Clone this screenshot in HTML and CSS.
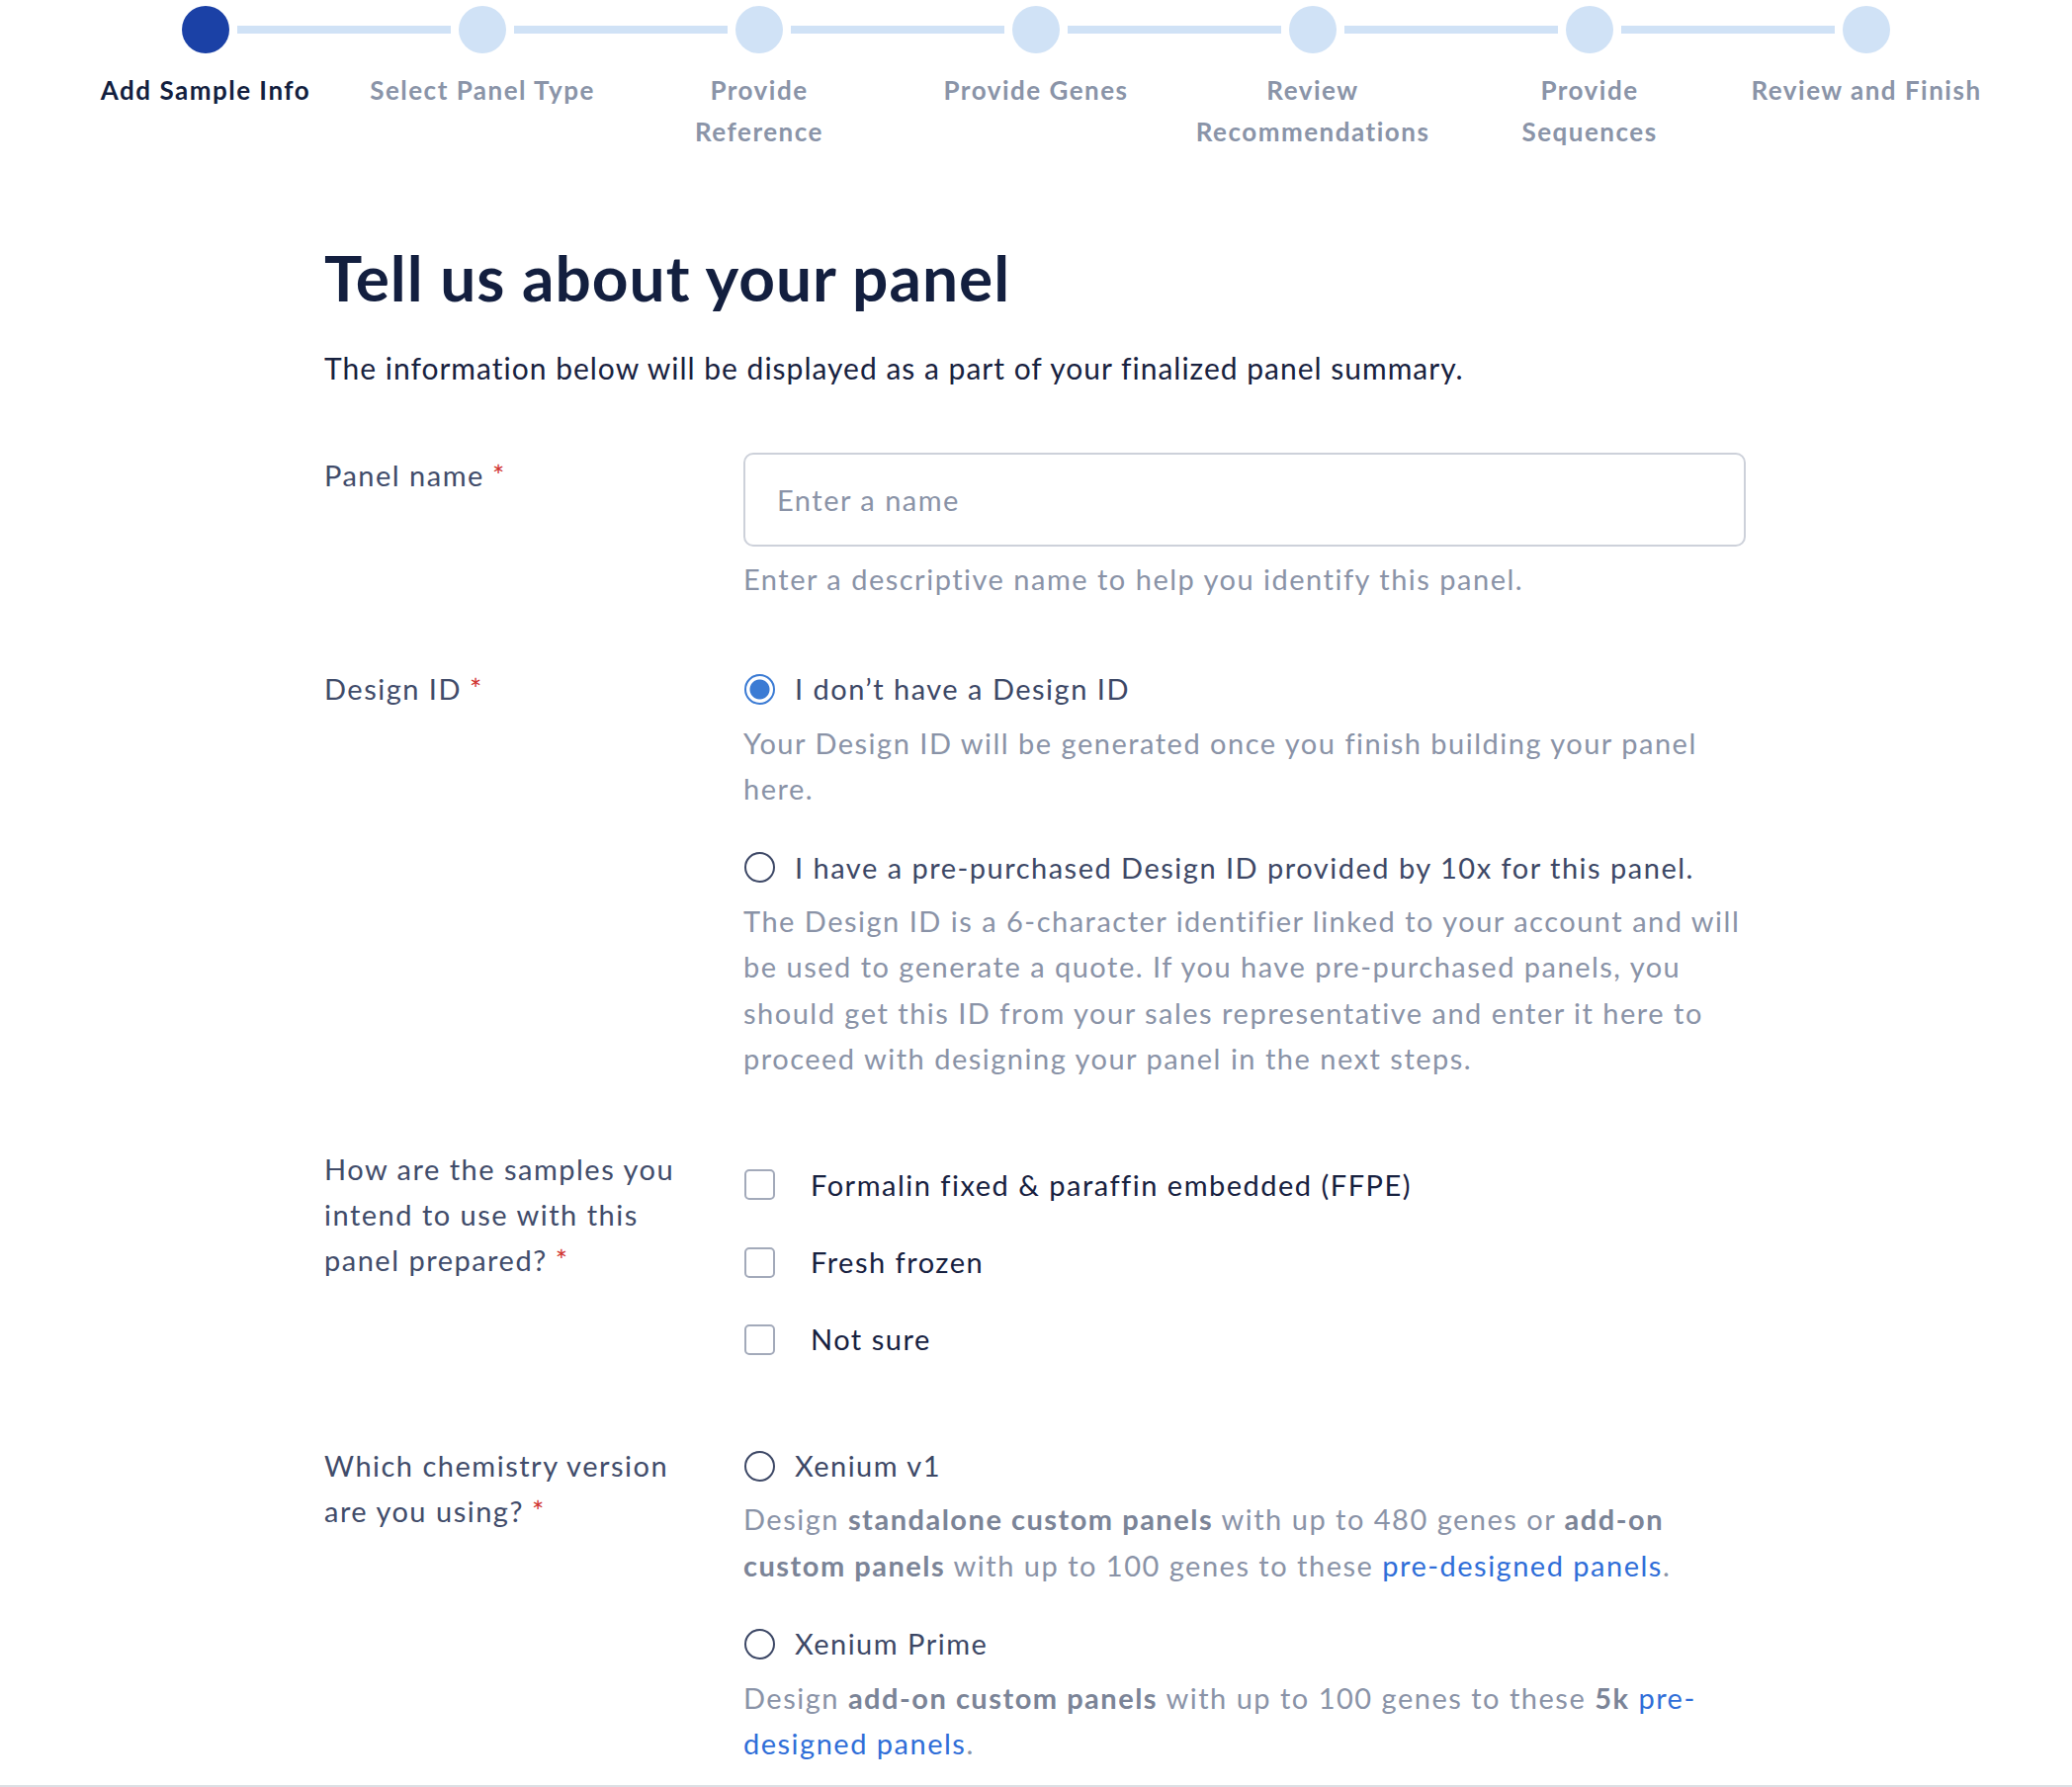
FILE: index.html
```html
<!DOCTYPE html>
<html lang="en">
<head>
<meta charset="utf-8">
<title>Tell us about your panel</title>
<link rel="stylesheet" href="styles.css">
</head>
<body>
<nav class="stepper">
  <div class="track">
    <span class="dot dot-active"></span><span class="bar"></span>
    <span class="dot"></span><span class="bar"></span>
    <span class="dot"></span><span class="bar"></span>
    <span class="dot"></span><span class="bar"></span>
    <span class="dot"></span><span class="bar"></span>
    <span class="dot"></span><span class="bar"></span>
    <span class="dot"></span>
  </div>
  <ol class="step-labels">
    <li class="step-label step-label-active">Add Sample Info</li>
    <li class="step-label">Select Panel Type</li>
    <li class="step-label">Provide<br>Reference</li>
    <li class="step-label">Provide Genes</li>
    <li class="step-label">Review<br>Recommendations</li>
    <li class="step-label">Provide<br>Sequences</li>
    <li class="step-label">Review and Finish</li>
  </ol>
</nav>

<main class="content">
  <h1 class="title">Tell us about your panel</h1>
  <p class="intro">The information below will be displayed as a part of your finalized panel summary.</p>

  <div class="form">
    <div class="row">
      <div class="label">Panel name<span class="req">*</span></div>
      <div class="control">
        <input class="text-input" type="text" placeholder="Enter a name">
        <p class="help help-input">Enter a descriptive name to help you identify this panel.</p>
      </div>
    </div>

    <div class="row">
      <div class="label">Design ID<span class="req">*</span></div>
      <div class="control">
        <div class="option">
          <span class="radio radio-checked"></span>
          <span class="option-text">I don’t have a Design ID</span>
        </div>
        <p class="help help-option">Your Design ID will be generated once you finish building your panel here.</p>
        <div class="option option-next">
          <span class="radio"></span>
          <span class="option-text">I have a pre-purchased Design ID provided by 10x for this panel.</span>
        </div>
        <p class="help help-option">The Design ID is a 6-character identifier linked to your account and will be used to generate a quote. If you have pre-purchased panels, you should get this ID from your sales representative and enter it here to proceed with designing your panel in the next steps.</p>
      </div>
    </div>

    <div class="row">
      <div class="label label-narrow">How are the samples you intend to use with this panel prepared?<span class="req">*</span></div>
      <div class="control">
        <div class="check-item"><span class="checkbox"></span><span class="check-text">Formalin fixed &amp; paraffin embedded (FFPE)</span></div>
        <div class="check-item"><span class="checkbox"></span><span class="check-text">Fresh frozen</span></div>
        <div class="check-item"><span class="checkbox"></span><span class="check-text">Not sure</span></div>
      </div>
    </div>

    <div class="row">
      <div class="label label-narrow">Which chemistry version are you using?<span class="req">*</span></div>
      <div class="control">
        <div class="option">
          <span class="radio"></span>
          <span class="option-text">Xenium v1</span>
        </div>
        <p class="help help-option">Design <b>standalone custom panels</b> with up to 480 genes or <b>add-on custom panels</b> with up to 100 genes to these <a class="link" href="#">pre-designed panels</a>.</p>
        <div class="option option-next">
          <span class="radio"></span>
          <span class="option-text">Xenium Prime</span>
        </div>
        <p class="help help-option">Design <b>add-on custom panels</b> with up to 100 genes to these <b>5k</b> <a class="link" href="#">pre-designed panels</a>.</p>
      </div>
    </div>
  </div>
</main>
<div class="footer-edge"></div>
</body>
</html>
```

FILE: styles.css
```css
* { box-sizing: border-box; }

html, body {
  margin: 0;
  padding: 0;
  background: #ffffff;
}

body {
  font-family: Lato, "Open Sans", "Liberation Sans", sans-serif;
  color: #18223f;
}

/* ---------- stepper ---------- */
.stepper {
  width: 1960px;
  margin: 0 auto;
  padding-top: 6px;
}

.track {
  display: flex;
  align-items: center;
  width: 1728px;
  margin: 0 auto;
}

.dot {
  flex: 0 0 48px;
  width: 48px;
  height: 48px;
  border-radius: 50%;
  background: #d0e2f6;
}

.dot-active {
  background: #1b41a6;
}

.bar {
  flex: 1 1 auto;
  height: 8px;
  margin: 0 8px;
  background: #d0e2f6;
}

.step-labels {
  list-style: none;
  margin: 16px 0 0;
  padding: 0;
  display: grid;
  grid-template-columns: repeat(7, 280px);
}

.step-label {
  justify-self: center;
  text-align: center;
  white-space: nowrap;
  font-size: 26px;
  line-height: 42px;
  font-weight: 700;
  letter-spacing: 1.5px;
  color: #8a94a8;
}

.step-label-active {
  color: #131f3f;
}

/* ---------- content ---------- */
.content {
  width: 1440px;
  margin: 0 auto;
}

.title {
  margin: 88px 0 0;
  font-size: 64px;
  line-height: 77px;
  font-weight: 700;
  letter-spacing: 1px;
  color: #131f3f;
}

.intro {
  margin: 30px 0 0;
  font-size: 30px;
  line-height: 46px;
  letter-spacing: 1px;
  color: #18223f;
}

.form {
  margin-top: 63px;
  display: flex;
  flex-direction: column;
  gap: 65px;
}

.row {
  display: grid;
  grid-template-columns: 424px 1016px;
  font-size: 29px;
  line-height: 46.4px;
  letter-spacing: 1.5px;
}

.label {
  color: #414c6a;
}

.label-narrow {
  max-width: 372px;
}

.req {
  color: #d0312d;
  margin-left: 8px;
}

.text-input {
  display: block;
  width: 1014px;
  height: 95px;
  margin: 0;
  padding: 0 32px;
  border: 2px solid #cdd1da;
  border-radius: 10px;
  font-family: inherit;
  font-size: 29px;
  letter-spacing: 1.5px;
  color: #18223f;
  background: #ffffff;
  outline: none;
}

.text-input::placeholder {
  color: #8a93a7;
}

.help {
  margin: 0;
  color: #8a93a7;
}

.help-input {
  margin-top: 10px;
}

.help-option {
  margin-top: 8px;
}

.help b {
  font-weight: 700;
  color: #7b8497;
}

.link {
  color: #2f6ed8;
  text-decoration: none;
}

.option {
  display: flex;
  align-items: center;
  gap: 20px;
}

.option-next {
  margin-top: 33px;
}

.option-text {
  color: #3d4866;
}

.radio {
  flex: 0 0 31px;
  width: 31px;
  height: 31px;
  margin-left: 1px;
  border: 2px solid #3d4866;
  border-radius: 50%;
  background: #ffffff;
}

.radio-checked {
  border-color: #3b7bd4;
  background: radial-gradient(circle, #3b7bd4 0, #3b7bd4 9.5px, #ffffff 10.5px);
}

.check-item {
  display: flex;
  align-items: center;
  gap: 36px;
  padding: 16px 0;
}

.checkbox {
  flex: 0 0 31px;
  width: 31px;
  height: 31px;
  margin-left: 1px;
  border: 2px solid #a3aaba;
  border-radius: 5px;
  background: #ffffff;
}

.check-text {
  color: #17213f;
}

.footer-edge {
  position: fixed;
  left: 0;
  right: 0;
  bottom: 0;
  height: 2px;
  background: #dcdfe4;
}
```
